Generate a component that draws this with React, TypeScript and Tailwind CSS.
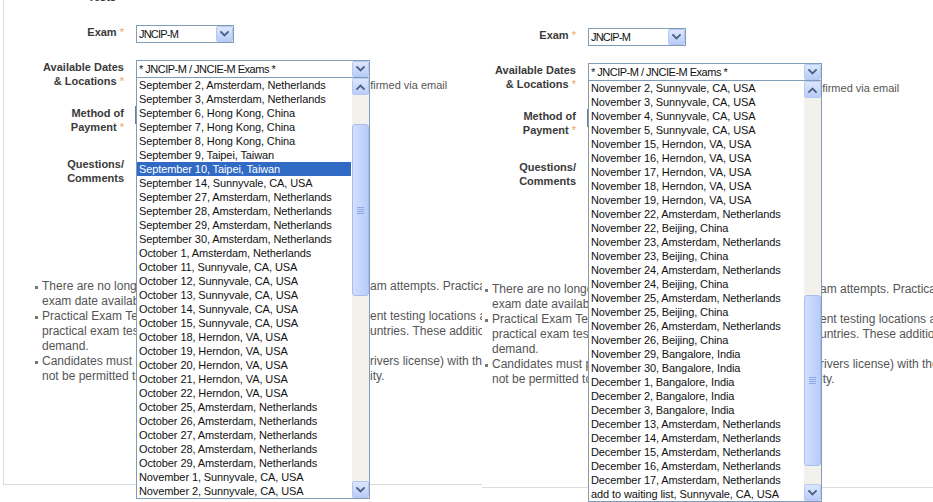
import React from "react";

const leftOptions = [
  "September 2, Amsterdam, Netherlands",
  "September 3, Amsterdam, Netherlands",
  "September 6, Hong Kong, China",
  "September 7, Hong Kong, China",
  "September 8, Hong Kong, China",
  "September 9, Taipei, Taiwan",
  "September 10, Taipei, Taiwan",
  "September 14, Sunnyvale, CA, USA",
  "September 27, Amsterdam, Netherlands",
  "September 28, Amsterdam, Netherlands",
  "September 29, Amsterdam, Netherlands",
  "September 30, Amsterdam, Netherlands",
  "October 1, Amsterdam, Netherlands",
  "October 11, Sunnyvale, CA, USA",
  "October 12, Sunnyvale, CA, USA",
  "October 13, Sunnyvale, CA, USA",
  "October 14, Sunnyvale, CA, USA",
  "October 15, Sunnyvale, CA, USA",
  "October 18, Herndon, VA, USA",
  "October 19, Herndon, VA, USA",
  "October 20, Herndon, VA, USA",
  "October 21, Herndon, VA, USA",
  "October 22, Herndon, VA, USA",
  "October 25, Amsterdam, Netherlands",
  "October 26, Amsterdam, Netherlands",
  "October 27, Amsterdam, Netherlands",
  "October 28, Amsterdam, Netherlands",
  "October 29, Amsterdam, Netherlands",
  "November 1, Sunnyvale, CA, USA",
  "November 2, Sunnyvale, CA, USA",
];

const rightOptions = [
  "November 2, Sunnyvale, CA, USA",
  "November 3, Sunnyvale, CA, USA",
  "November 4, Sunnyvale, CA, USA",
  "November 5, Sunnyvale, CA, USA",
  "November 15, Herndon, VA, USA",
  "November 16, Herndon, VA, USA",
  "November 17, Herndon, VA, USA",
  "November 18, Herndon, VA, USA",
  "November 19, Herndon, VA, USA",
  "November 22, Amsterdam, Netherlands",
  "November 22, Beijing, China",
  "November 23, Amsterdam, Netherlands",
  "November 23, Beijing, China",
  "November 24, Amsterdam, Netherlands",
  "November 24, Beijing, China",
  "November 25, Amsterdam, Netherlands",
  "November 25, Beijing, China",
  "November 26, Amsterdam, Netherlands",
  "November 26, Beijing, China",
  "November 29, Bangalore, India",
  "November 30, Bangalore, India",
  "December 1, Bangalore, India",
  "December 2, Bangalore, India",
  "December 3, Bangalore, India",
  "December 13, Amsterdam, Netherlands",
  "December 14, Amsterdam, Netherlands",
  "December 15, Amsterdam, Netherlands",
  "December 16, Amsterdam, Netherlands",
  "December 17, Amsterdam, Netherlands",
  "add to waiting list, Sunnyvale, CA, USA",
];

const bullets: string[][][] = [
  [
    [
      "There are no longer restrictions on the number of practical ex",
      "am attempts. Practical exam candidates may register for the next",
    ],
    ["exam date available."],
  ],
  [
    [
      "Practical Exam Testing is available at each of Juniper's perman",
      "ent testing locations and at additional locations in select",
    ],
    [
      "practical exam testing sites located in various co",
      "untries. These additional sessions are scheduled based on",
    ],
    ["demand."],
  ],
  [
    [
      "Candidates must present a valid government-issued photo ID (passport or d",
      "rivers license) with their signature. Candidates without proper ID will",
    ],
    [
      "not be permitted to take the exam and will forfeit the exam fee and eligibil",
      "ity.",
    ],
  ],
];

function Chevron({ up = false }: { up?: boolean }) {
  return (
    <svg width="9" height="6" viewBox="0 0 9 6" className={up ? "rotate-180" : ""}>
      <path d="M1 1 L4.5 4.5 L8 1" fill="none" stroke="#4d6185" strokeWidth="1.8" strokeLinecap="square" />
    </svg>
  );
}

function XPButton({ up = false, className = "" }: { up?: boolean; className?: string }) {
  return (
    <div
      className={`flex shrink-0 items-center justify-center rounded-[2px] border border-[#b5c8f2] bg-gradient-to-b from-[#dde7fd] to-[#b9ccf8] ${className}`}
    >
      <Chevron up={up} />
    </div>
  );
}

function Label({ lines, star = false }: { lines: string[]; star?: boolean }) {
  return (
    <div className="w-[120px] shrink-0 text-right text-[11px] font-bold leading-[14px] text-[#3a3a3a]">
      {lines.map((l, i) => (
        <div key={i}>
          {l}
          {star && i === lines.length - 1 && <span className="font-normal text-[#f5a04f]"> *</span>}
        </div>
      ))}
    </div>
  );
}

function Scrollbar({ thumbTop, thumbHeight }: { thumbTop: number; thumbHeight: number }) {
  return (
    <div className="flex h-[420px] w-[17px] shrink-0 flex-col bg-[#f3f1ec]">
      <XPButton up className="h-[17px] w-[17px]" />
      <div className="flex-1">
        <div
          className="flex w-[17px] items-center justify-center rounded-[3px] border border-[#a7bdf0] bg-gradient-to-r from-[#d3dffd] to-[#b8ccf9]"
          style={{ marginTop: thumbTop, height: thumbHeight }}
        >
          <div className="flex flex-col gap-px">
            <div className="h-px w-[7px] bg-[#8fa8e6]" />
            <div className="h-px w-[7px] bg-[#8fa8e6]" />
            <div className="h-px w-[7px] bg-[#8fa8e6]" />
            <div className="h-px w-[7px] bg-[#8fa8e6]" />
          </div>
        </div>
      </div>
      <XPButton className="h-[17px] w-[17px]" />
    </div>
  );
}

function DateDropdown({
  options,
  selected,
  thumbTop,
  thumbHeight,
}: {
  options: string[];
  selected: number;
  thumbTop: number;
  thumbHeight: number;
}) {
  return (
    <div className="relative z-20 w-[234px]">
      <div className="flex h-[18px] items-center border border-[#7f9db9] bg-white">
        <span className="flex-1 whitespace-nowrap pl-[2px] text-[11px] tracking-[-0.5px] text-[#111]">
          * JNCIP-M / JNCIE-M Exams *
        </span>
        <XPButton className="h-[16px] w-[17px]" />
      </div>
      <div className="whitespace-nowrap text-[11px] leading-[14px] text-[#555]">
        The selected exam date and location will be confirmed via email
      </div>
      <div className="absolute left-0 top-[18px] flex w-full border border-t-0 border-[#7f9db9] bg-white">
        <div className="w-[215px] shrink-0">
          {options.map((o, i) => (
            <div
              key={i}
              className={`h-[14px] whitespace-nowrap pl-[2px] text-[11px] leading-[14px] tracking-[-0.1px] ${
                i === selected ? "mr-px bg-[#316ac5] text-white" : "text-[#111]"
              }`}
            >
              {o}
            </div>
          ))}
        </div>
        <Scrollbar thumbTop={thumbTop} thumbHeight={thumbHeight} />
      </div>
    </div>
  );
}

function Panel({
  options,
  selected,
  thumbTop,
  thumbHeight,
  showTop,
  bulletIndent,
}: {
  options: string[];
  selected: number;
  thumbTop: number;
  thumbHeight: number;
  showTop: boolean;
  bulletIndent: string;
}) {
  return (
    <div className="ml-[3px] h-[495px] border-b border-l border-[#dcdcdc]">
      <div
        className={`-mt-[10px] w-[112px] text-right text-[11px] font-bold leading-[14px] text-[#3a3a3a] ${
          showTop ? "" : "invisible"
        }`}
      >
        Tests
      </div>

      <div className="mt-[21px] flex items-start">
        <Label lines={["Exam"]} star />
        <div className="ml-[12px] flex h-[18px] w-[98px] items-center border border-[#7f9db9] bg-white">
          <span className="flex-1 pl-[2px] text-[11px] tracking-[-0.8px] text-[#111]">JNCIP-M</span>
          <XPButton className="h-[16px] w-[17px]" />
        </div>
      </div>

      <div className="mt-[17px] flex items-start">
        <Label lines={["Available Dates", "& Locations"]} star />
        <div className="ml-[12px]">
          <DateDropdown options={options} selected={selected} thumbTop={thumbTop} thumbHeight={thumbHeight} />
        </div>
      </div>

      <div className="mt-[14px] flex items-start">
        <Label lines={["Method of", "Payment"]} star />
        <div className="ml-[11px] h-[18px] w-[180px] border border-[#6f7f99] bg-white" />
      </div>

      <div className="mt-[23px] flex items-start">
        <Label lines={["Questions/", "Comments"]} />
        <div className="ml-[12px] h-[80px] w-[220px] border border-[#7f9db9] bg-white" />
      </div>

      <div className="mt-[42px] text-[12px] leading-[15px] text-[#555]">
        {bullets.map((b, bi) => (
          <div key={bi} className="flex">
            <span className={`mt-[7px] h-[3px] w-[3px] shrink-0 bg-[#777] ${bulletIndent}`} />
            <div className="ml-[4px]">
              {b.map((line, li) => (
                <div key={li} className="flex whitespace-nowrap">
                  {line.length > 1 ? (
                    <>
                      <span className="w-[328px] shrink-0 overflow-hidden">{line[0]}</span>
                      <span>{line[1]}</span>
                    </>
                  ) : (
                    <span>{line[0]}</span>
                  )}
                </div>
              ))}
            </div>
          </div>
        ))}
      </div>
    </div>
  );
}

export default function App() {
  return (
    <div className="flex h-[502px] w-[933px] overflow-hidden bg-white font-['Liberation_Sans',Arial,sans-serif]">
      <div className="relative z-10 h-[502px] w-[482px] shrink-0 overflow-hidden bg-white">
        <Panel
          options={leftOptions}
          selected={6}
          thumbTop={29}
          thumbHeight={172}
          showTop
          bulletIndent="ml-[31px]"
        />
      </div>
      <div className="relative z-0 -ml-[30px] h-[502px] w-[482px] shrink-0 overflow-hidden bg-white pt-[3px]">
        <Panel
          options={rightOptions}
          selected={-1}
          thumbTop={197}
          thumbHeight={171}
          showTop={false}
          bulletIndent="ml-[29px]"
        />
      </div>
    </div>
  );
}
